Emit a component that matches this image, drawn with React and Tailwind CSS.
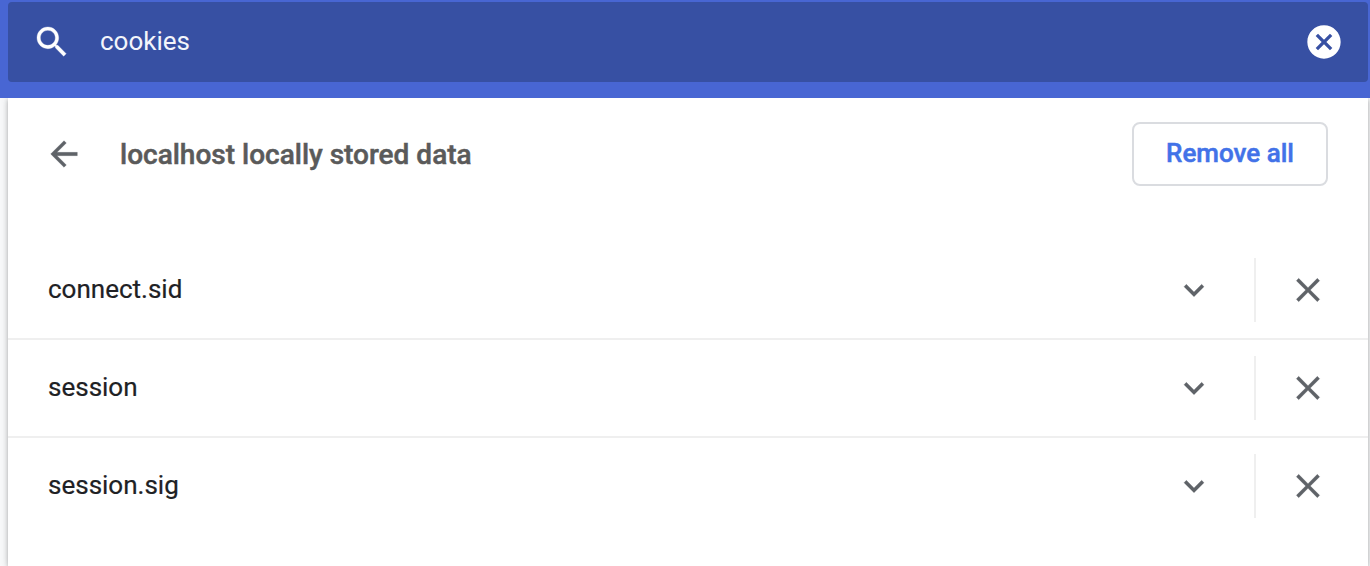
const cookies = ['connect.sid', 'session', 'session.sig'];

const paths = {
  search:
    'M15.5 14h-.79l-.28-.27C15.41 12.59 16 11.11 16 9.5 16 5.91 13.09 3 9.5 3S3 5.91 3 9.5 5.91 16 9.5 16c1.61 0 3.09-.59 4.23-1.57l.27.28v.79l5 4.99L20.49 19l-4.99-5zm-6 0C7.01 14 5 11.99 5 9.5S7.01 5 9.5 5 14 7.01 14 9.5 11.99 14 9.5 14z',
  cancel:
    'M12 2C6.47 2 2 6.47 2 12s4.47 10 10 10 10-4.47 10-10S17.53 2 12 2zm5 13.59L15.59 17 12 13.41 8.41 17 7 15.59 10.59 12 7 8.41 8.41 7 12 10.59 15.59 7 17 8.41 13.41 12 17 15.59z',
  back: 'M20 11H7.83l5.59-5.59L12 4l-8 8 8 8 1.41-1.41L7.83 13H20v-2z',
  expand: 'M16.59 8.59L12 13.17 7.41 8.59 6 10l6 6 6-6z',
  close:
    'M19 6.41L17.59 5 12 10.59 6.41 5 5 6.41 10.59 12 5 17.59 6.41 19 12 13.41 17.59 19 19 17.59 13.41 12z',
};

function Icon({ name, className = '' }) {
  return (
    <svg
      viewBox="0 0 24 24"
      className={`block size-10 shrink-0 fill-current ${className}`}
      aria-hidden="true"
    >
      <path d={paths[name]} />
    </svg>
  );
}

function IconButton({ name, label, className }) {
  return (
    <button type="button" aria-label={label} className={className}>
      <Icon name={name} className={name === 'cancel' ? '' : 'stroke-current stroke-[0.15]'} />
    </button>
  );
}

function SearchBar() {
  return (
    <header className="h-[98px] shrink-0 bg-[#4866d3] pt-0.5 pr-0.5 pl-2">
      <div className="flex h-20 items-center rounded bg-[#3750a3] px-6 text-white">
        <Icon name="search" className="stroke-current stroke-[0.2]" />
        <span className="ml-7 flex-1 pb-0.5 text-[26px] leading-8 text-[#f3f5fb]">cookies</span>
        <IconButton name="cancel" label="Clear search" />
      </div>
    </header>
  );
}

function CookieRow({ name }) {
  return (
    <li className="flex h-[98px] items-center border-b-2 border-[#efefef] pl-10 text-[#5f6368] last:border-transparent">
      <span className="flex-1 pb-0.5 text-[26px] leading-8 text-[#202124] [-webkit-text-stroke:0.2px]">
        {name}
      </span>
      <IconButton name="expand" label="Show details" className="mr-10" />
      <div className="h-16 w-0.5 bg-[#efefef]" />
      <IconButton name="close" label="Remove" className="mr-10 ml-8" />
    </li>
  );
}

export default function App() {
  return (
    <div className="flex h-[566px] w-[1370px] flex-col overflow-hidden bg-[#f8f9fa] font-['Roboto',sans-serif]">
      <SearchBar />
      <div className="flex min-h-0 flex-1 overflow-hidden pr-0.5 pl-2">
        <main className="flex-1 bg-white shadow-[0_2px_4px_rgba(60,64,67,0.3),0_0_8px_rgba(60,64,67,0.2)]">
          <div className="flex h-28 items-center px-9">
            <IconButton name="back" label="Back" className="text-[#5f6368]" />
            <h1 className="ml-9 flex-1 pt-0.5 text-[28px] leading-8 font-medium text-[#5a5a5a] [-webkit-text-stroke:0.5px]">
              localhost locally stored data
            </h1>
            <button
              type="button"
              className="mr-1 h-16 w-[196px] rounded-lg border-2 border-[#dadce0] pb-0.5 text-[26px] leading-8 font-medium text-[#4272e8] [-webkit-text-stroke:0.5px]"
            >
              Remove all
            </button>
          </div>
          <ul className="pt-8">
            {cookies.map((name) => (
              <CookieRow key={name} name={name} />
            ))}
          </ul>
        </main>
      </div>
    </div>
  );
}
